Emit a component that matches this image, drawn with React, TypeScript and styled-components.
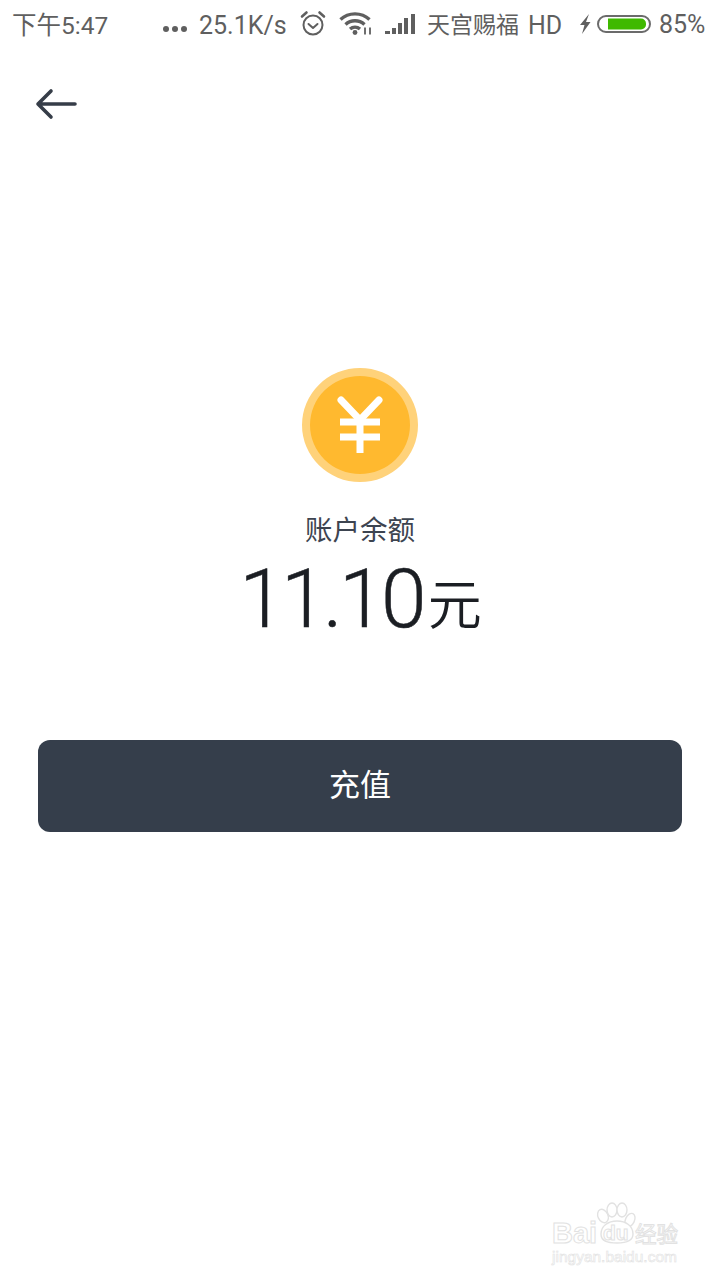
import React from 'react';
import styled, { createGlobalStyle } from 'styled-components';

const GlobalStyle = createGlobalStyle`
  html, body {
    margin: 0;
    padding: 0;
    background: #fff;
  }
  * {
    box-sizing: border-box;
  }
`;

const Page = styled.div`
  position: relative;
  width: 720px;
  height: 1280px;
  background: #fff;
  overflow: hidden;
  font-family: Roboto, 'Noto Sans CJK SC', sans-serif;
`;

const StatusBar = styled.div`
  display: flex;
  align-items: center;
  height: 50px;
  padding: 0 0 2px 12px;
  color: #5f5f5f;
  font-size: 25px;
  white-space: nowrap;

  svg {
    flex: none;
  }
`;

const Clock = styled.span`
  flex: none;
  width: 151px;
  margin-bottom: 2px;
  font-size: 24.5px;
`;

const Dots = styled.span`
  display: flex;
  flex: none;
  gap: 3px;
  margin: 10px 12px 0 0;
`;

const Dot = styled.i`
  width: 6px;
  height: 6px;
  border-radius: 50%;
  background: #5f5f5f;
`;

const Speed = styled.span`
  flex: none;
  width: 88px;
  margin-top: 2px;
`;

const StatusIcon = styled.span<{ $gap: number }>`
  display: flex;
  flex: none;
  margin-left: ${p => p.$gap}px;
`;

const Carrier = styled.span`
  flex: none;
  width: 92px;
  margin: 0 0 2px 12px;
  font-size: 23px;
`;

const Network = styled.span`
  flex: none;
  width: 36px;
  margin: 2px 0 0 9px;
`;

const Percent = styled.span`
  flex: none;
  margin-left: 8px;
`;

const Main = styled.main`
  display: flex;
  flex-direction: column;
  align-items: center;
  padding: 0 38px;
`;

const BackButton = styled.button`
  align-self: flex-start;
  display: flex;
  width: 44px;
  height: 44px;
  margin: 32px 0 0 -3px;
  padding: 0;
  border: 0;
  background: none;
`;

const Coin = styled.div`
  display: flex;
  align-items: center;
  justify-content: center;
  width: 116px;
  height: 114px;
  margin-top: 242px;
  border: 8px solid #ffd27a;
  border-radius: 50%;
  background: #ffb92f;
`;

const BalanceLabel = styled.div`
  margin-top: 31px;
  color: #3d4450;
  font-size: 27.5px;
  line-height: 36px;
`;

const Amount = styled.div`
  height: 84px;
  margin: 8px 0 0 1px;
  color: #1b1e23;
  font-size: 82px;
  line-height: 84px;
  font-weight: 350;
  letter-spacing: -3.6px;
  white-space: nowrap;
  -webkit-text-stroke: 0.5px #1b1e23;
`;

const Unit = styled.span`
  margin-left: 5px;
  font-size: 54px;
  line-height: 1;
  letter-spacing: 0;
  vertical-align: 2px;
  -webkit-text-stroke: 0;
`;

const RechargeButton = styled.button`
  width: 100%;
  height: 92px;
  margin-top: 99px;
  padding: 0 0 8px;
  border: 0;
  border-radius: 12px;
  background: #353e4b;
  color: #fff;
  font-family: inherit;
  font-size: 31px;
`;

const Watermark = styled.div`
  position: absolute;
  left: 552px;
  top: 1202px;
  width: 130px;
  color: #fff;
  -webkit-text-stroke: 1px #e2e2e2;
`;

const BrandRow = styled.div`
  display: flex;
  align-items: center;
  height: 46px;
  padding-top: 16px;
  font-family: 'Liberation Sans', sans-serif;
  font-size: 29px;
  font-weight: 700;
  line-height: 30px;
`;

const BrandBai = styled.span`
  flex: none;
  width: 83px;
`;

const BrandCn = styled.span`
  flex: none;
  font-family: 'Noto Sans CJK SC', sans-serif;
  font-size: 21.5px;
  font-weight: 400;
`;

const BrandUrl = styled.div`
  font-family: 'Liberation Sans', sans-serif;
  font-size: 15.500px;
  line-height: 18px;
  -webkit-text-stroke-width: 0.6px;
  white-space: nowrap;
`;

const PawLayer = styled.div`
  position: absolute;
  left: 43px;
  top: 0;
  display: flex;
`;

const DuText = styled.span`
  position: absolute;
  left: 51px;
  top: 18px;
  font-family: 'Liberation Sans', sans-serif;
  font-size: 21px;
  font-weight: 700;
  line-height: 26px;
`;

const Alarm = () => (
  <svg width="28" height="28" viewBox="0 0 28 28" fill="none" stroke="#5f5f5f" strokeWidth="2" strokeLinecap="round" strokeLinejoin="round">
    <circle cx="14" cy="15" r="9.500" />
    <path d="M9.500 14l4.500 4 4.500-4" />
    <path d="M3 6.500L7.500 2.500M25 6.500L20.500 2.500" strokeWidth="2.600" />
  </svg>
);

const Wifi = () => (
  <svg width="34" height="26" viewBox="0 0 34 26" fill="none" stroke="#5f5f5f" strokeWidth="3.400">
    <path d="M1.500 8.500C9.500 1 22.500 1 30.500 8.500" />
    <path d="M6.500 13.500C12 8.500 20 8.500 25.500 13.500" />
    <path d="M11 18C14 15.500 18 15.500 21 18" />
    <circle cx="16" cy="21.500" r="2.400" fill="#5f5f5f" stroke="none" />
    <path d="M26 16.500v7M31 16.500v7" strokeWidth="1.800" />
  </svg>
);

const Signal = () => (
  <svg width="30" height="24" viewBox="0 0 30 24" fill="#5f5f5f">
    <rect x="0" y="19" width="5" height="3" />
    <rect x="7" y="16" width="4" height="6" />
    <rect x="13" y="11" width="4" height="11" />
    <rect x="19" y="6" width="4" height="16" />
    <rect x="26" y="2" width="4" height="20" />
  </svg>
);

const Bolt = () => (
  <svg width="14" height="22" viewBox="0 0 14 22" fill="#5f5f5f">
    <path d="M11 1L2 12h4.500L4 21 12.500 9H8z" />
  </svg>
);

const Battery = () => (
  <svg width="54" height="18" viewBox="0 0 54 18">
    <rect x="1" y="1" width="52" height="16" rx="8" fill="#fff" stroke="#6b6b6b" strokeWidth="2" />
    <path d="M11 3.500h33a5 5 0 0 1 5 5v1a5 5 0 0 1-5 5H11z" fill="#3fb900" />
  </svg>
);

const BackArrow = () => (
  <svg width="44" height="44" viewBox="0 0 44 44" fill="none" stroke="#363d48" strokeWidth="3.600" strokeLinecap="round" strokeLinejoin="round">
    <path d="M3 22h37M16 9L3 22l13 13" />
  </svg>
);

const YuanMark = () => (
  <svg width="46" height="60" viewBox="0 0 46 60" fill="none" stroke="#fff" strokeWidth="7">
    <path d="M4 5l19 20 19-20" strokeLinecap="round" />
    <path d="M23 25v33M3 27h40M3 42h40" />
  </svg>
);

const Paw = () => (
  <svg width="44" height="44" viewBox="0 0 44 44" fill="#fff" stroke="#e2e2e2" strokeWidth="1.400">
    <ellipse cx="8" cy="14" rx="5" ry="7" transform="rotate(-25 8 14)" />
    <ellipse cx="17" cy="8" rx="5" ry="7" />
    <ellipse cx="27" cy="8" rx="5" ry="7" />
    <ellipse cx="35" cy="18" rx="4.500" ry="7" transform="rotate(25 35 18)" />
    <path d="M6 32c0-8 7-13 16-13s16 5 16 13c0 7-6 9-16 9s-16-2-16-9z" />
  </svg>
);

const App: React.FC = () => {
  return (
    <Page>
      <GlobalStyle />
      <StatusBar>
        <Clock>下午5:47</Clock>
        <Dots>
          <Dot />
          <Dot />
          <Dot />
        </Dots>
        <Speed>25.1K/s</Speed>
        <StatusIcon $gap={12}><Alarm /></StatusIcon>
        <StatusIcon $gap={12}><Wifi /></StatusIcon>
        <StatusIcon $gap={12}><Signal /></StatusIcon>
        <Carrier>天宫赐福</Carrier>
        <Network>HD</Network>
        <StatusIcon $gap={14}><Bolt /></StatusIcon>
        <StatusIcon $gap={5}><Battery /></StatusIcon>
        <Percent>85%</Percent>
      </StatusBar>
      <Main>
        <BackButton aria-label="返回">
          <BackArrow />
        </BackButton>
        <Coin>
          <YuanMark />
        </Coin>
        <BalanceLabel>账户余额</BalanceLabel>
        <Amount>
          11.10<Unit>元</Unit>
        </Amount>
        <RechargeButton>充值</RechargeButton>
      </Main>
      <Watermark>
        <PawLayer>
          <Paw />
        </PawLayer>
        <DuText>du</DuText>
        <BrandRow>
          <BrandBai>Bai</BrandBai>
          <BrandCn>经验</BrandCn>
        </BrandRow>
        <BrandUrl>jingyan.baidu.com</BrandUrl>
      </Watermark>
    </Page>
  );
};

export default App;
